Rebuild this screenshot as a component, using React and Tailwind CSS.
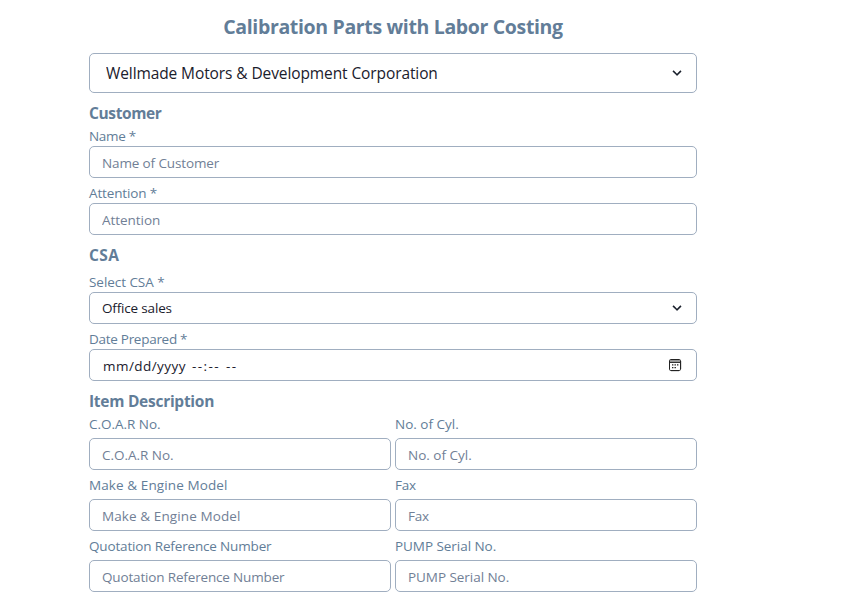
const box = "block w-full rounded-[5px] border border-[#a0aec0] bg-white";
const control = box + " h-8 px-3 text-[13.5px]";

function Chevron({ className }) {
  return (
    <svg viewBox="0 0 20 20" className={"pointer-events-none absolute h-4 w-4 fill-[#1a202c] " + className}>
      <path d="M9.293 12.95l.707.707L15.657 8l-1.414-1.414L10 10.828 5.757 6.586 4.343 8z" />
    </svg>
  );
}

function CalendarIcon() {
  return (
    <svg width="13" height="13" viewBox="0 0 13 13" fill="none">
      <rect x="0.5" y="0.5" width="11" height="11" rx="1.2" stroke="#222" />
      <path d="M1 2h10" stroke="#999" strokeWidth="2" />
      <path d="M1 3.5h10" stroke="#333" />
      <path d="M3 5.9h1.4M5.5 5.9h1.4M8 5.9h1.4M3 8.6h1.4M5.5 8.6h1.4" stroke="#222" strokeWidth="1.4" />
      <path d="M2 12.5h8M12.5 2v8" stroke="#ddd" />
    </svg>
  );
}

function Heading({ tracking, children }) {
  return <h2 className={"-mt-px mb-px text-[15.5px] leading-6 font-bold " + tracking}>{children}</h2>;
}

function Label({ tracking = "", children }) {
  return <label className={"block text-[13.5px] leading-5 " + tracking}>{children}</label>;
}

function TextField({ label, placeholder, tracking = "", inputTracking = tracking, gap = "" }) {
  return (
    <div>
      <Label tracking={tracking}>{label}</Label>
      <input
        className={control + " pt-0.5 placeholder:text-[#718096] " + inputTracking + " " + gap}
        placeholder={placeholder}
      />
    </div>
  );
}

const items = [
  { name: "C.O.A.R No.", tracking: "tracking-[-0.02px]" },
  { name: "No. of Cyl.", tracking: "tracking-normal" },
  { name: "Make & Engine Model", tracking: "tracking-[0.1px]" },
  { name: "Fax", tracking: "tracking-[-0.2px]" },
  { name: "Quotation Reference Number", tracking: "tracking-[-0.16px]" },
  { name: "PUMP Serial No.", tracking: "tracking-[-0.05px]" },
];

export default function App() {
  return (
    <main className="ml-[89px] w-[608px] pt-[13px] font-['Open_Sans','Noto_Sans',sans-serif] text-[#627d98]">
      <h1 className="text-center text-[19.5px] leading-7 font-bold tracking-[-0.35px]">
        Calibration Parts with Labor Costing
      </h1>
      <div className="relative mt-3">
        <select className={box + " h-10 appearance-none px-4 pt-0.5 text-[15.5px] tracking-[-0.1px] text-[#1a202c]"}>
          <option>Wellmade Motors &amp; Development Corporation</option>
        </select>
        <Chevron className="top-3 right-3" />
      </div>

      <section className="mt-[9px] flow-root">
        <Heading tracking="tracking-[-0.38px]">Customer</Heading>
        <div className="flex flex-col gap-[5px]">
          <TextField
            label="Name *"
            placeholder="Name of Customer"
            tracking="tracking-[-0.3px]"
            inputTracking="tracking-[-0.13px]"
          />
          <TextField
            label="Attention *"
            placeholder="Attention"
            tracking="tracking-[-0.15px]"
            inputTracking="tracking-[-0.05px]"
          />
        </div>
      </section>

      <section className="mt-[9px] flow-root">
        <Heading tracking="tracking-[0.4px]">CSA</Heading>
        <div className="mt-1 flex flex-col gap-[5px] pt-px">
          <div>
            <Label tracking="tracking-[-0.05px]">Select CSA *</Label>
            <div className="relative">
              <select className={control + " appearance-none tracking-[-0.17px] text-[#1a202c]"}>
                <option>Office sales</option>
              </select>
              <Chevron className="top-2 right-3" />
            </div>
          </div>
          <div>
            <Label tracking="tracking-[-0.28px]">Date Prepared *</Label>
            <div className={control + " flex! items-center justify-between text-[#1a202c]"}>
              <div className="flex gap-1.5 pt-0.5 pl-px">
                <span className="tracking-[0.45px]">mm/dd/yyyy</span>
                <span className="tracking-[1.4px]">--:--</span>
                <span className="tracking-[1.4px]">--</span>
              </div>
              <span className="mr-0.5"><CalendarIcon /></span>
            </div>
          </div>
        </div>
      </section>

      <section className="mt-[9px] flow-root">
        <Heading tracking="tracking-[-0.27px]">Item Description</Heading>
        <div className="grid grid-cols-2 gap-x-1 gap-y-[5px]">
          {items.map(({ name, tracking }) => (
            <TextField key={name} label={name} placeholder={name} tracking={tracking} gap="mt-1" />
          ))}
        </div>
      </section>
    </main>
  );
}
